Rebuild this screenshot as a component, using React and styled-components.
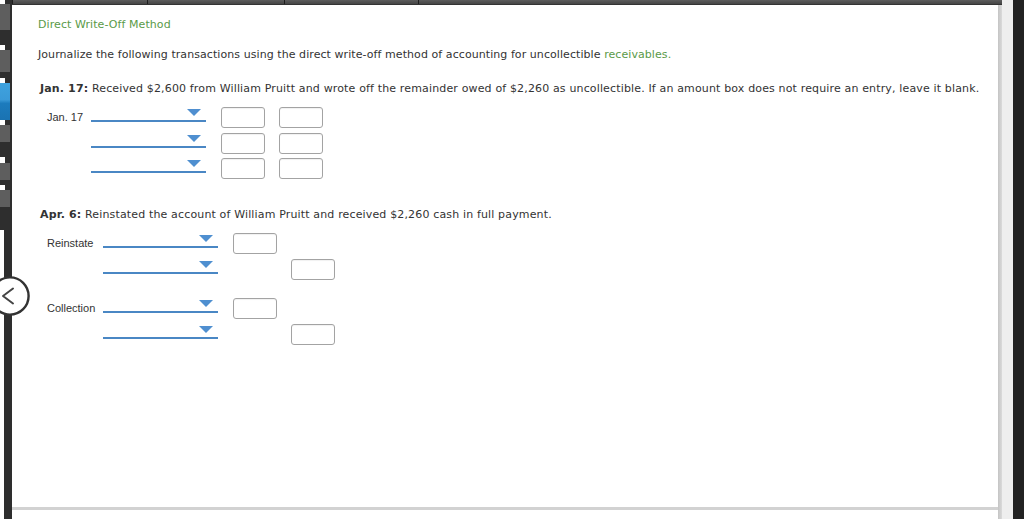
import React from 'react'
import styled, { createGlobalStyle } from 'styled-components'

const GlobalStyle = createGlobalStyle`
  html, body {
    margin: 0;
    padding: 0;
    background: #fff;
    overflow: hidden;
  }
`

const railSegments = [
  { h: 4, tone: 'white' },
  { h: 26, tone: 'grey' },
  { h: 15, tone: 'dark' },
  { h: 5, tone: 'white' },
  { h: 22, tone: 'grey' },
  { h: 6, tone: 'dark' },
  { h: 5, tone: 'white' },
  { h: 37, tone: 'blue' },
  { h: 5, tone: 'white' },
  { h: 17, tone: 'grey' },
  { h: 15, tone: 'dark' },
  { h: 6, tone: 'white' },
  { h: 17, tone: 'grey' },
  { h: 5, tone: 'dark' },
  { h: 5, tone: 'white' },
  { h: 17, tone: 'grey' },
  { h: 23, tone: 'dark' },
]

const janRows = [
  { label: 'Jan. 17', debit: true, credit: true },
  { label: '', debit: true, credit: true },
  { label: '', debit: true, credit: true },
]

const aprGroups = [
  [
    { label: 'Reinstate', debit: true, credit: false },
    { label: '', debit: false, credit: true },
  ],
  [
    { label: 'Collection', debit: true, credit: false },
    { label: '', debit: false, credit: true },
  ],
]

export default function App() {
  return (
    <>
      <GlobalStyle />
      <Screen>
        <Rail>
          {railSegments.map((s, i) => (
            <RailPiece key={i} $h={s.h} $tone={s.tone} />
          ))}
          <RailRest />
        </Rail>

        <Stage>
          <TopBar>
            <TopTab $w={135} />
            <TopTab $w={137} />
            <TopTab $w={134} />
            <TopTab $w={584} />
          </TopBar>
          <Body>
            <Main>
              <Panel>
                <Title>Direct Write-Off Method</Title>
                <Intro>
                  Journalize the following transactions using the direct write-off method of accounting for uncollectible{' '}
                  <Link>receivables.</Link>
                </Intro>

                <Prompt>
                  <strong>Jan. 17:</strong> Received $2,600 from William Pruitt and wrote off the remainder owed of $2,260 as uncollectible. If an amount box does not require an entry, leave it blank.
                </Prompt>

                <Journal>
                  {janRows.map((r, i) => (
                    <EntryRow key={i} row={r} pitch={25.5} />
                  ))}
                </Journal>

                <Prompt $top={24}>
                  <strong>Apr. 6:</strong> Reinstated the account of William Pruitt and received $2,260 cash in full payment.
                </Prompt>

                <Journal>
                  {aprGroups.map((g, gi) => (
                    <React.Fragment key={gi}>
                      {gi > 0 && <Spacer />}
                      {g.map((r, i) => (
                        <EntryRow key={i} row={r} pitch={26} />
                      ))}
                    </React.Fragment>
                  ))}
                </Journal>
              </Panel>
              <BottomGap />
            </Main>
            <SideShadow />
          </Body>
        </Stage>

        <Gutter />
        <Edge />

        <BackButton width="40" height="40" viewBox="0 0 40 40">
          <circle cx="20" cy="20" r="18.6" fill="#fff" stroke="#333" strokeWidth="2.4" />
          <polyline points="23,12.5 13,20 23,27.5" fill="none" stroke="#444" strokeWidth="2" strokeLinecap="round" strokeLinejoin="round" />
        </BackButton>
      </Screen>
    </>
  )
}

function EntryRow({ row, pitch }) {
  return (
    <Row $pitch={pitch}>
      <Label>{row.label}</Label>
      <Select>
        <Caret />
      </Select>
      <Cell>{row.debit && <Amount />}</Cell>
      <Cell>{row.credit && <Amount />}</Cell>
    </Row>
  )
}

const Screen = styled.div`
  position: relative;
  display: flex;
  width: 1024px;
  height: 519px;
  overflow: hidden;
  font-family: "DejaVu Sans", Verdana, sans-serif;
  color: #333;
`

const Rail = styled.div`
  width: 12px;
  flex-shrink: 0;
  display: flex;
  flex-direction: column;
  background: #2e2e2e;
`

const toneColor = {
  white: '#fff',
  grey: '#5e5e5e',
  dark: 'transparent',
  blue: 'linear-gradient(#3fa2de 0%, #3a9ad8 45%, #1c7bbd 55%, #1a73b2 100%)',
}

const RailPiece = styled.div`
  height: ${p => p.$h}px;
  width: ${p => (p.$tone === 'white' ? 5 : 10)}px;
  background: ${p => toneColor[p.$tone]};
`

const RailRest = styled.div`
  flex: 1;
  width: 4px;
  background: #fff;
`

const Stage = styled.div`
  width: 990px;
  flex-shrink: 0;
  display: flex;
  flex-direction: column;
`

const TopBar = styled.div`
  height: 4px;
  display: flex;
  border-bottom: 1px solid #333;
  background: linear-gradient(#5c5c5c, #454545);
`

const TopTab = styled.div`
  width: ${p => p.$w}px;
  height: 100%;
  border-left: 1px solid #1e1e1e;
  box-sizing: border-box;
`

const Body = styled.div`
  flex: 1;
  display: flex;
`

const Main = styled.div`
  flex: 1;
  display: flex;
  flex-direction: column;
`

const Panel = styled.div`
  flex: 1;
  background: #fff;
  padding: 13px 0 0 26px;
  border-bottom: 3px solid #d2d2d2;
  box-shadow: 0 1px 0 #e4e4e4;
`

const BottomGap = styled.div`
  height: 9px;
  background: #fff;
`

const SideShadow = styled.div`
  width: 4px;
  background: linear-gradient(90deg, #c4c4c4, #dadada);
`

const Gutter = styled.div`
  width: 11px;
  flex-shrink: 0;
  background: #eee;
`

const Edge = styled.div`
  width: 11px;
  flex-shrink: 0;
  background: #222;
`

const Title = styled.div`
  font-size: 11px;
  line-height: 14px;
  letter-spacing: 0.08px;
  color: #5a9a48;
`

const Intro = styled.p`
  margin: 16px 0 0;
  font-size: 11px;
  line-height: 14px;
  letter-spacing: 0.07px;
`

const Link = styled.span`
  color: #5a9a48;
`

const Prompt = styled.p`
  margin: ${p => p.$top || 20}px 0 0 2px;
  font-size: 11px;
  line-height: 14px;
  letter-spacing: 0.15px;
  white-space: nowrap;

  strong {
    font-weight: bold;
  }
`

const Journal = styled.div`
  margin: 11px 0 0 9px;
  display: grid;
  grid-template-columns: auto 115px 59px 58px;
  justify-content: start;
`

const Row = styled.div`
  display: contents;

  & > * {
    height: ${p => p.$pitch}px;
  }
`

const Spacer = styled.div`
  grid-column: 1 / -1;
  height: 13px;
`

const Label = styled.div`
  padding-right: 8px;
  font-family: "Liberation Sans", Arial, sans-serif;
  font-size: 11px;
  line-height: 21px;
  color: #333;
  white-space: nowrap;
`

const Select = styled.div`
  box-sizing: border-box;
  display: flex;
  justify-content: flex-end;
  align-items: flex-start;
  padding: 2px 5px 0 0;
  border-bottom: 2px solid #4a87c4;
  && {
    height: 15px;
  }
`

const Caret = styled.span`
  width: 0;
  height: 0;
  border-left: 7px solid transparent;
  border-right: 7px solid transparent;
  border-top: 7px solid #4f8fd0;
`

const Cell = styled.div`
  display: flex;
  justify-content: flex-end;
  align-items: flex-start;
`

const Amount = styled.div`
  box-sizing: border-box;
  width: 44px;
  height: 21px;
  border: 1px solid #a3a3a3;
  border-radius: 3px;
  background: #fff;
  box-shadow: inset 0 1px 1px rgba(0, 0, 0, 0.06);
`

const BackButton = styled.svg`
  position: absolute;
  left: -10px;
  top: 276px;
`
